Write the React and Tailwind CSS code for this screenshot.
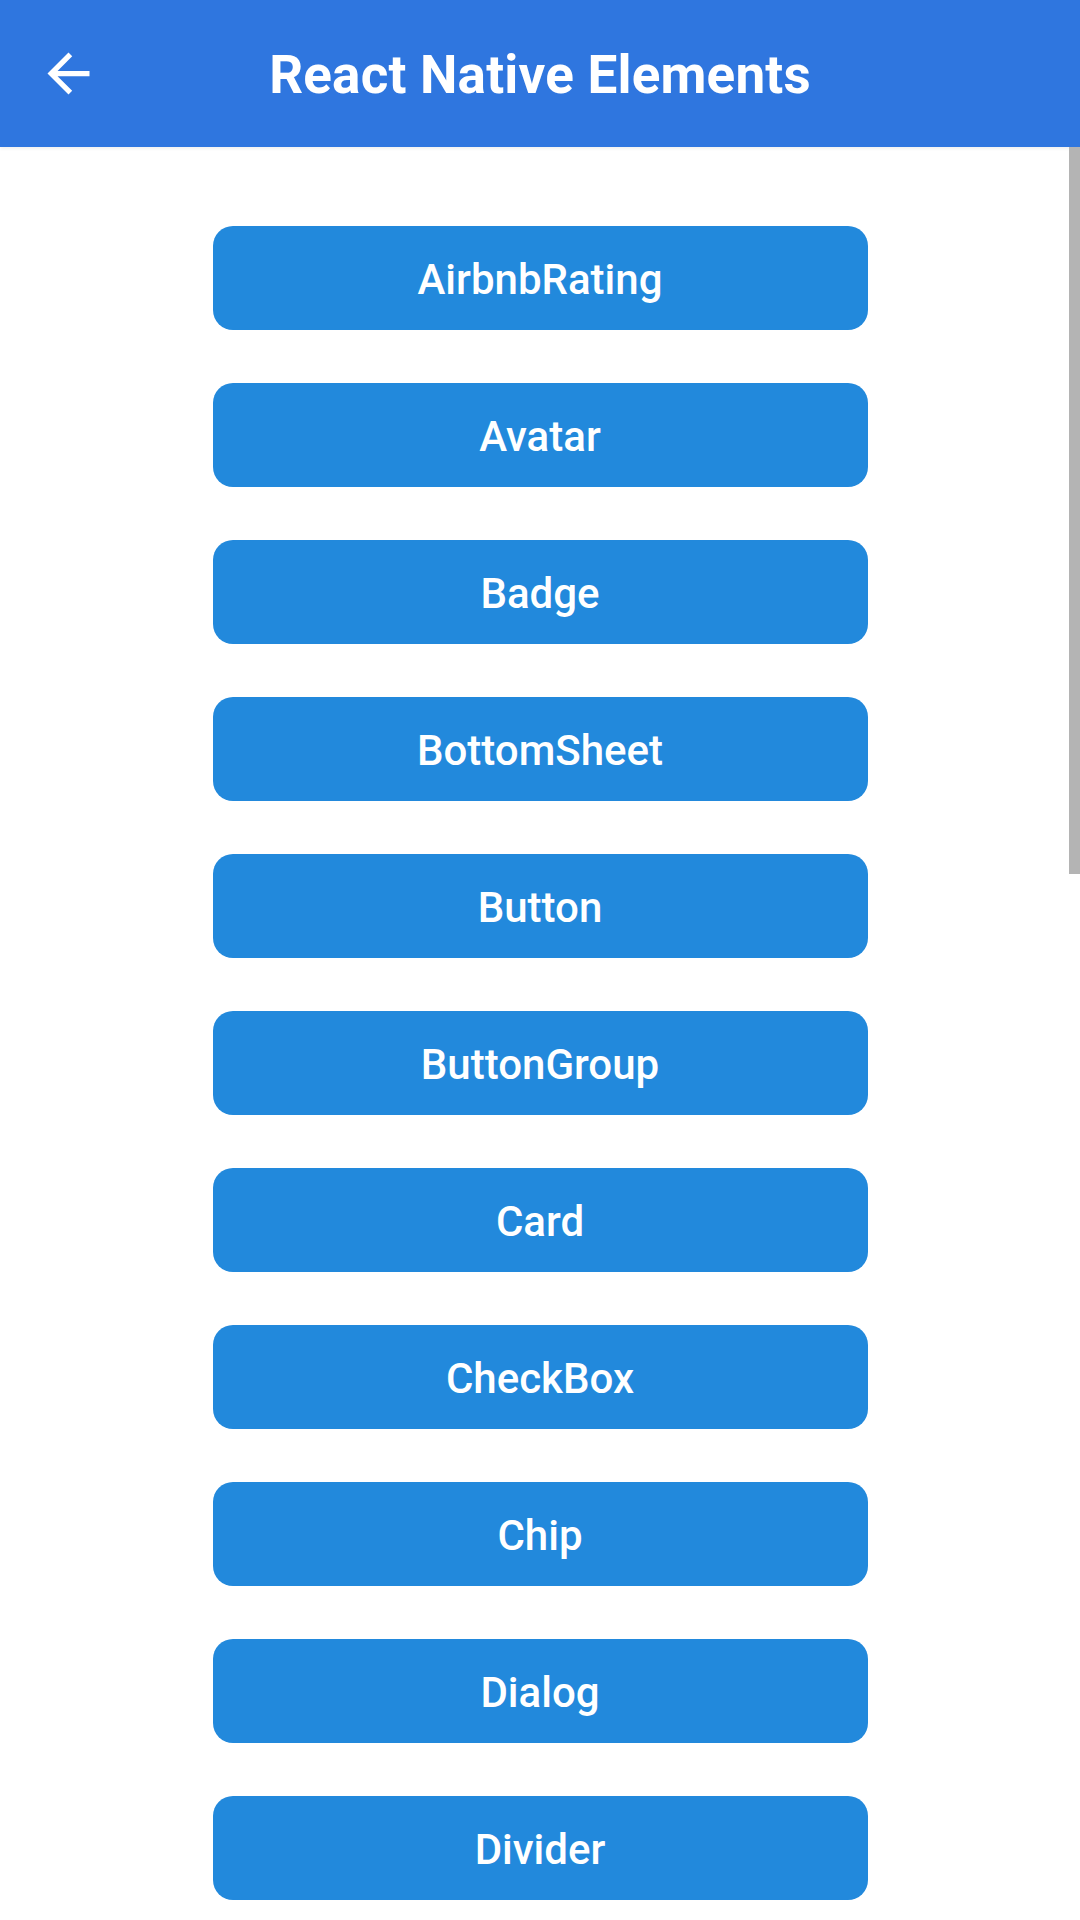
const ITEMS = [
  'AirbnbRating',
  'Avatar',
  'Badge',
  'BottomSheet',
  'Button',
  'ButtonGroup',
  'Card',
  'CheckBox',
  'Chip',
  'Dialog',
  'Divider',
];

const BackArrow = () => (
  <svg viewBox="0 0 24 24" className="w-[63px] h-[63px]" fill="#ffffff">
    <path d="M20 11H7.83l5.59-5.59L12 4l-8 8 8 8 1.41-1.41L7.83 13H20v-2z" />
  </svg>
);

export default function App() {
  return (
    <div className="relative w-[1080px] h-[1920px] overflow-hidden bg-white font-['Roboto',sans-serif]">
      {/* Header */}
      <div className="relative h-[147px] bg-[#2f76df] flex items-center justify-center shadow-[0_2px_3px_rgba(0,0,0,0.06)]">
        <button className="absolute left-[37px] top-[42px]" aria-label="Back">
          <BackArrow />
        </button>
        <h1 className="text-[53px] font-bold text-white leading-none tracking-[0.2px] mt-[4px]">
          React Native Elements
        </h1>
      </div>

      {/* List */}
      <div className="flex flex-col items-center gap-[53px] pt-[79px]">
        {ITEMS.map((name) => (
          <button
            key={name}
            className="w-[655px] h-[104px] rounded-[20px] bg-[#2289dc] flex items-center justify-center text-white text-[42px] font-medium leading-none pt-[4px]"
          >
            {name}
          </button>
        ))}
      </div>

      {/* Scroll indicator */}
      <div className="absolute right-0 top-[147px] w-[11px] h-[727px] bg-[#b4b4b4]" />
    </div>
  );
}
